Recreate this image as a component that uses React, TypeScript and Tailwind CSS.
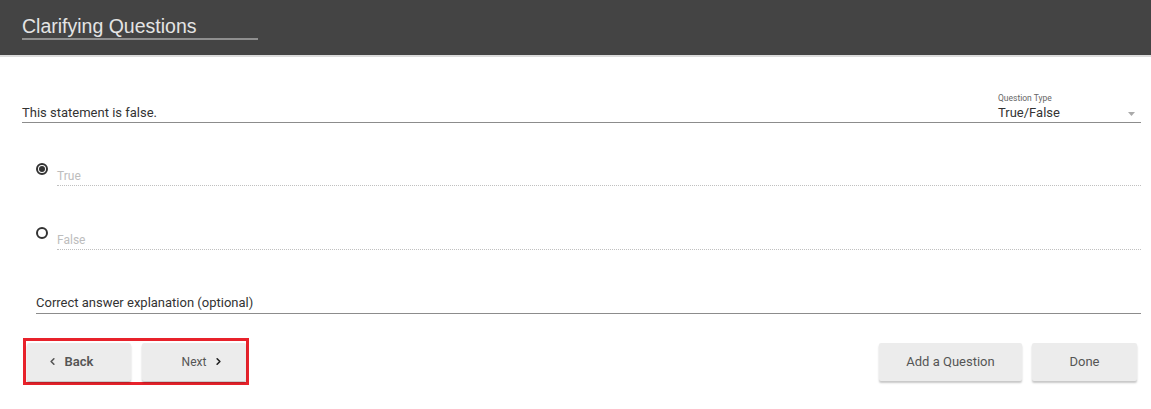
import React, { useState } from "react";
import { ChevronLeft, ChevronRight } from "lucide-react";

type RadioRowProps = {
  label: string;
  checked: boolean;
  onSelect: () => void;
  className?: string;
};

function RadioRow({ label, checked, onSelect, className }: RadioRowProps) {
  return (
    <div className={`flex items-start ${className ?? ""}`} onClick={onSelect} role="radio" aria-checked={checked}>
      <div className="ml-[14px] w-[12px] h-[12px] rounded-full border-2 border-[#333] flex items-center justify-center">
        {checked && <div className="w-[6px] h-[6px] rounded-full bg-[#333]" />}
      </div>
      <div className="flex-1 ml-[9px] pt-[6px] pb-[2px] border-b border-dotted border-[#c0c0c0] text-[12px] leading-[14px] text-[#bdbdbd]">
        {label}
      </div>
    </div>
  );
}

function Btn({ children, className }: { children: React.ReactNode; className?: string }) {
  return (
    <button
      className={`h-[38px] bg-[#ececec] rounded-[2px] shadow-[0_2px_2px_rgba(0,0,0,0.22)] text-[#555] flex items-center justify-center ${className ?? ""}`}
    >
      {children}
    </button>
  );
}

export default function App() {
  const [answer, setAnswer] = useState<"true" | "false">("true");

  return (
    <div className="w-[1151px] h-[409px] bg-white font-['Roboto',sans-serif] overflow-hidden">
      <div className="h-[55px] bg-[#444444] pl-[22px] pt-[15px]">
        <div className="inline-block w-[236px] border-b-2 border-[#8f8f8f] pb-[1px] font-['Liberation_Sans',Arial,sans-serif] text-[19.5px] leading-[22px] text-[#e4e4e4]">
          Clarifying Questions
        </div>
      </div>
      <div className="h-[2px] bg-[#dcdcdc]" />

      <div className="pl-[22px] pr-[10px]">
        {/* question row */}
        <div className="mt-[31px] flex items-end border-b border-[#8c8c8c] h-[35px]">
          <div className="flex-1 pb-[2px] text-[13px] leading-[15px] text-[#333]">This statement is false.</div>
          <div className="w-[143px] pb-[2px] flex flex-col">
            <span className="text-[8.5px] leading-[10px] text-[#666]">Question Type</span>
            <div className="flex items-center justify-between mt-[2px]">
              <span className="text-[13px] leading-[15px] text-[#333]">True/False</span>
              <svg width="7" height="4" viewBox="0 0 7 4" className="mr-[6px] mt-[3px]">
                <path d="M0 0 L7 0 L3.5 4 Z" fill="#aaa" />
              </svg>
            </div>
          </div>
        </div>

        <RadioRow className="mt-[40px]" label="True" checked={answer === "true"} onSelect={() => setAnswer("true")} />
        <RadioRow className="mt-[41px]" label="False" checked={answer === "false"} onSelect={() => setAnswer("false")} />

        <div className="mt-[45px] ml-[14px] pb-[3px] border-b border-[#8c8c8c] text-[13px] leading-[15px] text-[#333]">
          Correct answer explanation (optional)
        </div>

        {/* buttons */}
        <div className="mt-[24px] flex items-start justify-between">
          <div className="ml-[1px] border-[3px] border-[#e8222b] pl-[1px] pt-[2px] pb-[1px] flex gap-[11px]">
            <Btn className="w-[104px] text-[13px] text-[#222] font-semibold">
              <span className="relative">
                <ChevronLeft size={11} strokeWidth={3.5} className="absolute right-full mr-[7px] top-[4px]" />
                Back
              </span>
            </Btn>
            <Btn className="w-[104px] text-[12px]">
              <span className="relative">
                Next
                <ChevronRight size={11} strokeWidth={3.5} className="absolute left-full ml-[7px] top-[3px] text-[#222]" />
              </span>
            </Btn>
          </div>
          <div className="mt-[5px] mr-[4px] flex gap-[10px]">
            <Btn className="w-[143px] text-[13px]">Add a Question</Btn>
            <Btn className="w-[105px] text-[13px]">Done</Btn>
          </div>
        </div>
      </div>
    </div>
  );
}
